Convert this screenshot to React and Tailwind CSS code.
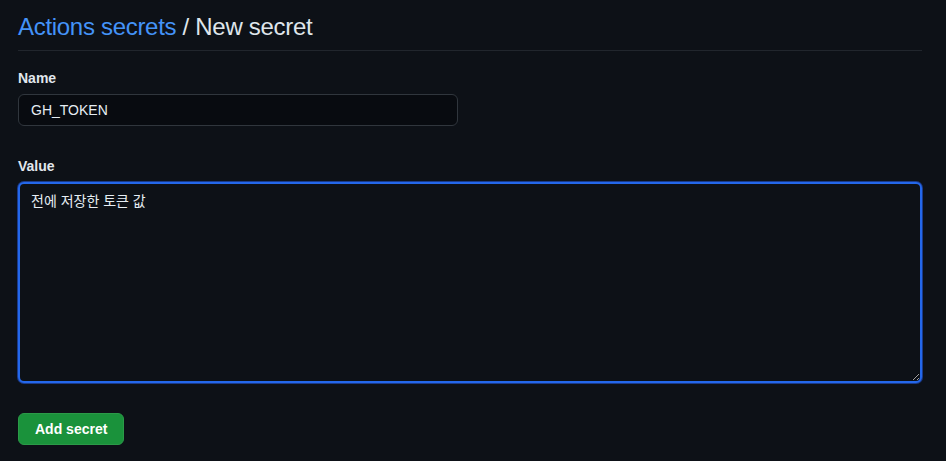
export default function App() {
  return (
    <div
      className="min-h-[461px] w-full bg-[#0d1117] pl-[18px] pr-[24px] pt-[11px] text-[#e6edf3]"
      style={{ fontFamily: '"Liberation Sans", Arial, "Noto Sans CJK KR", sans-serif' }}
    >
      <div className="border-b border-[#21262d] pb-[7px]">
        <h2 className="text-[24px] font-normal leading-[32px] tracking-[-0.3px]">
          <span className="text-[#4493f8]">Actions secrets</span>
          <span className="text-[#dfe5eb]"> / New secret</span>
        </h2>
      </div>
      <div className="mt-[17px]">
        <label className="block text-[14px] font-bold leading-[20px] text-[#e1e7ed]">Name</label>
        <input
          readOnly
          value="GH_TOKEN"
          className="mt-[6px] block h-[32px] w-[440px] rounded-[6px] border border-[#30363d] bg-[#080b10] px-[12px] text-[14px] text-[#e6edf3] outline-none"
          style={{ fontFamily: '"Liberation Sans", Arial, sans-serif' }}
        />
      </div>
      <div className="mt-[30px]">
        <label className="block text-[14px] font-bold leading-[20px] text-[#e1e7ed]">Value</label>
        <textarea
          readOnly
          value="전에 저장한 토큰 값"
          className="mt-[6px] block h-[201px] w-full resize-y rounded-[6px] border-2 border-[#2468eb] bg-[#0d1117] px-[11px] py-[7px] text-[14px] leading-[20px] text-[#e6edf3] outline-none shadow-[0_0_0_1px_#1a3a8a]"
          style={{ fontFamily: '"Liberation Sans", "Noto Sans CJK KR", sans-serif' }}
        />
      </div>
      <button className="mt-[30px] h-[32px] rounded-[6px] border border-[#2b9a48] bg-[#1a923b] px-[16px] text-[14px] font-bold text-white">
        Add secret
      </button>
    </div>
  );
}
